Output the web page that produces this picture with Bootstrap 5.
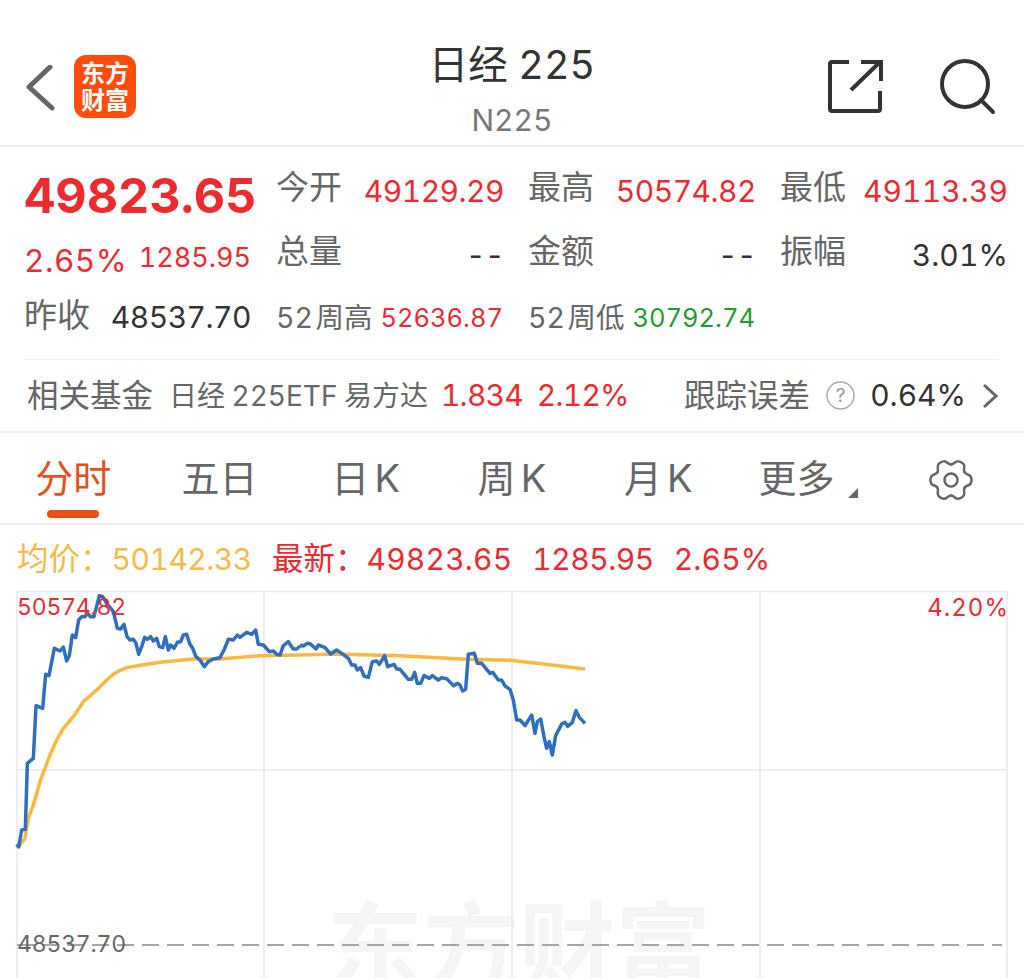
<!DOCTYPE html>
<html lang="zh-CN">
<head>
  <meta charset="UTF-8" />
  <meta name="viewport" content="width=device-width, initial-scale=1.0">
  <title>日经225</title>
  <link href="https://cdn.jsdelivr.net/npm/bootstrap@5.3.0/dist/css/bootstrap.min.css" rel="stylesheet">
  <style>
    body { font-family: Inter, "Noto Sans CJK SC", sans-serif; font-variant-numeric: tabular-nums; background: #fff; color: #333; overflow: hidden; width: 1024px; height: 978px; }
    .up { color: #ee2a2e; }
    .down { color: #1c9e2c; }
    .grey { color: #666; }
    .top-bar { height: 147px; border-bottom: 2px solid #eee; padding-top: 40px; }
    .top-side { width: 200px; }
    .back-svg { margin-left: 25px; margin-top: 25px; }
    .logo-box { width: 62px; height: 63px; margin-left: 18px; margin-top: 15px; background: #ff4b0b; border-radius: 12px; color: #fff; font-weight: 700; font-size: 24px; line-height: 27px; }
    .title-main { font-size: 39.5px; line-height: 50px; color: #333; }
    .title-sub { font-size: 30px; line-height: 34px; margin-top: 13px; color: #777; }
    .quote-wrap { height: 286px; border-bottom: 2px solid #eee; padding: 0 17px 0 25px; }
    .quote-grid { display: grid; grid-template-columns: 226px 226px 226px 226px; column-gap: 26px; padding-top: 11px; height: 213px; border-bottom: 1px solid #eee; margin-right: 9px; }
    .big-price { font-size: 48.5px; line-height: 48px; font-weight: 700; padding-top: 14px; margin-left: -1px; white-space: nowrap; }
    .cell-row { height: 64px; }
    .lab { font-size: 33px; color: #666; margin-top: -5px; margin-left: -1px; }
    .val { font-size: 30px; letter-spacing: -.5px; margin-top: 3px; margin-right: -1px; }
    .val-wide { letter-spacing: .1px; }
    .val-dark { font-size: 30px; letter-spacing: -.5px; margin-bottom: 2px; }
    .val-pct { font-size: 31.5px; letter-spacing: .5px; margin-top: 14px; margin-left: -1px; }
    .lab-sm { font-size: 28.5px; color: #666; word-spacing: -5px; margin-left: -1px; }
    .val-sm { font-size: 25.5px; }
    .val-low { font-size: 27px; margin-top: 8px; }
    .fund-row { height: 71px; font-size: 31.5px; color: #666; padding-left: 2px; padding-right: 9px; }
    .fund-row .fund-name { font-size: 28px; margin-left: 16px; word-spacing: -1px; }
    .num-sm { font-size: 30px; letter-spacing: -.8px; }
    .num-dark { font-size: 30px; letter-spacing: 0; margin-left: 15px; color: #333; }
    .fund-first { margin-left: 13px; }
    .fund-second { margin-left: 14px; }
    .tab-bar { height: 92px; border-bottom: 2px solid #eee; }
    .tab-bar .nav-link { color: #666; font-size: 38px; line-height: 46px; padding: 22px 0 0; height: 90px; position: relative; word-spacing: -5px; }
    .tab-bar .nav-link.active { color: #e8501a; }
    .tab-bar .nav-link.active::after { content: ""; position: absolute; left: 47px; top: 77px; width: 52px; height: 8px; border-radius: 4px; background: #e8501a; }
    .more-tab { padding-right: 16px !important; }
    .tri-mark { position: absolute; left: 117px; top: 55px; width: 0; height: 0; border-left: 10px solid transparent; border-bottom: 10px solid #666; }
    .gear-svg { display: block; margin: 3px auto 0; }
    .legend-row { height: 65px; padding: 14px 0 0 17px; font-size: 31.5px; line-height: 40px; }
    .legend-yellow { color: #f6bb45; width: 255px; }
    .legend-latest { gap: 20px; }
    .legend-num { font-size: 30px; letter-spacing: -.5px; }
    .legend-num-wide { font-size: 30px; letter-spacing: .2px; }
    .chart-area { position: relative; height: 388px; overflow: hidden; }
    .chart-svg { position: absolute; left: 0; top: 0; }
    .chart-label { position: absolute; font-size: 23px; letter-spacing: -.2px; line-height: 28px; }
    .chart-pct { font-size: 24px; letter-spacing: 1px; }
    .mark-text { position: absolute; left: 327px; top: 302px; font-size: 96px; line-height: 110px; font-weight: 700; color: #f5f5f5; white-space: nowrap; }
  </style>
</head>
<body>

<header class="top-bar d-flex">
  <div class="top-side d-flex align-items-start">
    <svg class="back-svg" width="31" height="46" viewBox="0 0 31 46"><path d="M25 2 L4 22 L27 43" fill="none" stroke="#666" stroke-width="5" stroke-linecap="round" stroke-linejoin="round"/></svg>
    <div class="logo-box d-flex flex-column align-items-center justify-content-center"><span>东方</span><span>财富</span></div>
  </div>
  <div class="flex-grow-1 text-center">
    <div class="title-main">日经 225</div>
    <div class="title-sub">N225</div>
  </div>
  <div class="top-side position-relative">
    <svg class="chart-svg" width="200" height="90" viewBox="824 40 200 90">
      <path d="M849 62 H832 Q830 62 830 64 V109 Q830 111 832 111 H878 Q880 111 880 109 V91 M861 62 H881 V81 M880 62 L851 90" fill="none" stroke="#333" stroke-width="4"/>
      <circle cx="965" cy="84" r="23" fill="none" stroke="#333" stroke-width="4"/>
      <path d="M981 100 L993 112" fill="none" stroke="#333" stroke-width="4" stroke-linecap="round"/>
    </svg>
  </div>
</header>

<section class="quote-wrap">
  <div class="quote-grid">
    <div>
      <div class="cell-row up big-price">49823.65</div>
      <div class="cell-row d-flex justify-content-between align-items-center up"><span class="val-pct">2.65%</span><span class="val-low">1285.95</span></div>
      <div class="cell-row d-flex justify-content-between align-items-center"><span class="lab">昨收</span><span class="val-dark">48537.70</span></div>
    </div>
    <div>
      <div class="cell-row d-flex justify-content-between align-items-center"><span class="lab">今开</span><span class="val up">49129.29</span></div>
      <div class="cell-row d-flex justify-content-between align-items-center"><span class="lab">总量</span><span class="val">--</span></div>
      <div class="cell-row d-flex justify-content-between align-items-center"><span class="lab-sm">52 周高</span><span class="val-sm up">52636.87</span></div>
    </div>
    <div>
      <div class="cell-row d-flex justify-content-between align-items-center"><span class="lab">最高</span><span class="val up">50574.82</span></div>
      <div class="cell-row d-flex justify-content-between align-items-center"><span class="lab">金额</span><span class="val">--</span></div>
      <div class="cell-row d-flex justify-content-between align-items-center"><span class="lab-sm">52 周低</span><span class="val-sm down">30792.74</span></div>
    </div>
    <div>
      <div class="cell-row d-flex justify-content-between align-items-center"><span class="lab">最低</span><span class="val val-wide up">49113.39</span></div>
      <div class="cell-row d-flex justify-content-between align-items-center"><span class="lab">振幅</span><span class="val val-wide">3.01%</span></div>
    </div>
  </div>
  <div class="fund-row d-flex align-items-center">
    <span>相关基金</span>
    <span class="fund-name">日经 225ETF 易方达</span>
    <span class="up num-sm fund-first">1.834</span>
    <span class="up num-sm fund-second">2.12%</span>
    <span class="ms-auto">跟踪误差</span>
    <svg class="ms-3" width="29" height="29" viewBox="0 0 29 29"><circle cx="14.5" cy="14.5" r="13.5" fill="none" stroke="#aaa" stroke-width="1.5"/><text x="14.5" y="21" text-anchor="middle" font-size="19" fill="#999">?</text></svg>
    <span class="num-dark">0.64%</span>
    <svg class="ms-3" width="16" height="26" viewBox="0 0 16 26"><path d="M2 2 L14 13 L2 24" fill="none" stroke="#666" stroke-width="3"/></svg>
  </div>
</section>

<nav class="tab-bar">
  <ul class="nav nav-justified">
    <li class="nav-item"><a class="nav-link active" href="#">分时</a></li>
    <li class="nav-item"><a class="nav-link" href="#">五日</a></li>
    <li class="nav-item"><a class="nav-link" href="#">日 K</a></li>
    <li class="nav-item"><a class="nav-link" href="#">周 K</a></li>
    <li class="nav-item"><a class="nav-link" href="#">月 K</a></li>
    <li class="nav-item"><a class="nav-link more-tab" href="#">更多<span class="tri-mark"></span></a></li>
    <li class="nav-item"><a class="nav-link" href="#">
      <svg class="gear-svg" width="46" height="44" viewBox="-23 -22 46 44" fill="none" stroke="#666" stroke-width="2.5" stroke-linecap="round">
        <path id="gear-lobe" d="M13.5 -7.8 C15 -5 19 -6 20 -3 C20.8 -1 20.8 1 20 3 C19 6 15 5 13.5 7.8"/>
        <use href="#gear-lobe" transform="rotate(60)"/>
        <use href="#gear-lobe" transform="rotate(120)"/>
        <use href="#gear-lobe" transform="rotate(180)"/>
        <use href="#gear-lobe" transform="rotate(240)"/>
        <use href="#gear-lobe" transform="rotate(300)"/>
        <circle r="6.5"/>
      </svg>
    </a></li>
  </ul>
</nav>

<div class="legend-row d-flex">
  <span class="legend-yellow">均价：<span class="legend-num">50142.33</span></span>
  <span class="up d-flex legend-latest"><span>最新：<span class="legend-num-wide">49823.65</span></span><span class="legend-num">1285.95</span><span class="legend-num-wide">2.65%</span></span>
</div>

<div class="chart-area">
  <div class="mark-text">东方财富</div>
  <svg class="chart-svg" width="1024" height="388" viewBox="0 590 1024 388">
    <g fill="none" stroke="#e8e8ef" stroke-width="1.5">
      <path d="M17 591 V978 M264 591 V978 M512 591 V978 M760 591 V978 M1007 591 V978"/>
      <path d="M17 591.5 H1007 M17 770 H1007"/>
    </g>
    <path d="M17 945 H1002" fill="none" stroke="#a5a5a5" stroke-width="2" stroke-dasharray="17 8"/>
    <g fill="none" stroke-linejoin="round" stroke-width="3.5">
      <g transform="translate(0 585) scale(.33333)"><polyline vector-effect="non-scaling-stroke" stroke="#fbb83f" points="56,785 75,760 85,700 100,660 120,590 150,510 170,465 190,430 220,395 250,350 290,315 320,285 340,268 360,256 380,248 420,241 480,232 580,222 660,222 780,212 900,210"/></g>
      <g transform="translate(300 620) scale(.33333)"><polyline vector-effect="non-scaling-stroke" stroke="#fbb83f" points="0,105 100,102 300,107 500,118 630,121 730,132 855,147"/></g>
      <g transform="translate(0 585) scale(.33333)"><polyline vector-effect="non-scaling-stroke" stroke="#2f6fbd" points="50,778 56,786 65,735 76,733 82,535 100,520 108,362 128,370 137,268 147,272 163,190 180,198 190,186 200,228 208,212 217,150 227,158 236,105 245,95 255,95 262,85 272,95 282,95 298,32 308,35 320,55 340,80 352,130 362,132 372,118 381,155 390,165 400,163 408,175 416,208 425,185 434,157 442,163 452,155 460,168 470,160 478,185 488,188 496,155 505,195 512,180 522,190 532,172 542,170 550,150 560,148 570,178 578,190 588,215 600,225 613,245 625,230 640,222 660,218 672,195 685,163 700,165 712,150 720,157 740,142 755,148 767,135 775,178 790,180 808,200 820,198 830,208 840,210 850,182 865,170 880,192 890,192 900,183"/></g>
      <g transform="translate(300 620) scale(.33333)"><polyline vector-effect="non-scaling-stroke" stroke="#2f6fbd" points="0,75 10,78 22,70 30,71 48,87 55,75 75,83 92,102 110,90 125,100 145,115 155,135 165,135 172,150 182,143 192,168 205,172 217,125 230,123 238,133 254,107 263,140 282,133 290,147 300,148 325,178 335,178 344,157 352,190 362,190 372,167 388,175 397,167 415,180 425,173 440,176 460,197 472,190 480,195 488,213 497,208 505,103 523,100 532,130 545,130 570,160 578,157 595,180 605,180 615,198 630,208 640,240 650,300 660,300 675,317 695,285 705,340 712,305 722,297 732,350 740,385 748,365 757,405 767,347 785,312 795,307 803,319 817,307 828,272 838,292 855,310"/></g>
    </g>
  </svg>
  <span class="chart-label up" style="left:17px;top:3px">50574.82</span>
  <span class="chart-label chart-pct up" style="right:15px;top:4px">4.20%</span>
  <span class="chart-label grey" style="left:17px;top:340px">48537.70</span>
</div>

<script src="https://cdn.jsdelivr.net/npm/bootstrap@5.3.0/dist/js/bootstrap.bundle.min.js"></script>
</body>
</html>
